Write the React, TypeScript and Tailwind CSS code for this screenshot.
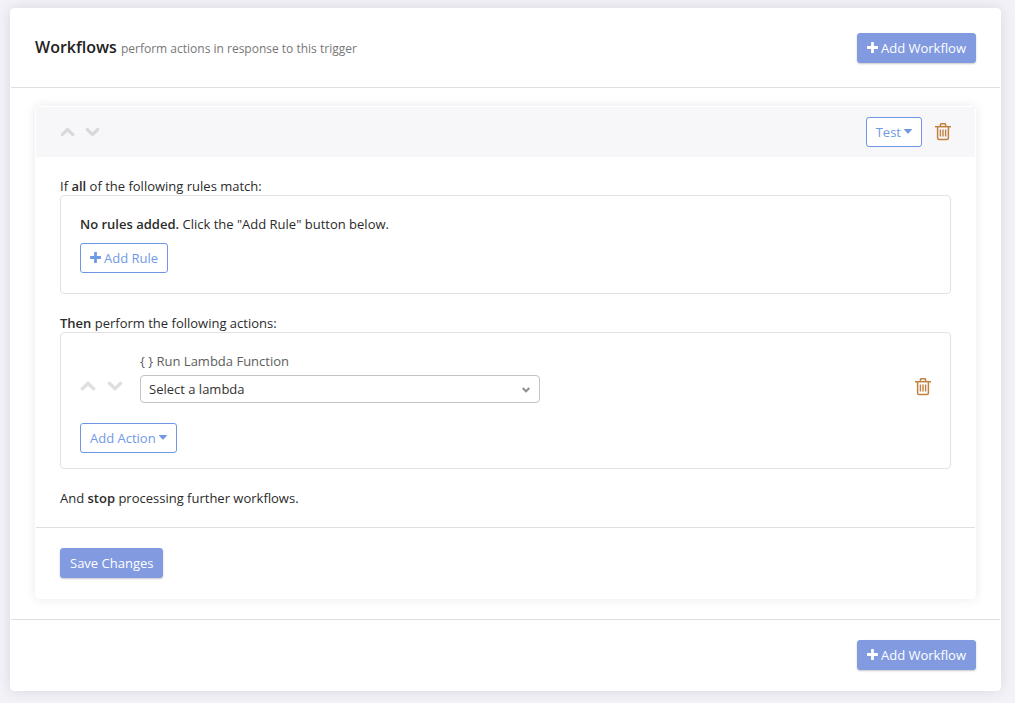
import type { ReactNode } from "react";

type ButtonProps = {
  children: ReactNode;
  variant?: "primary" | "outline";
};

function Button({ children, variant = "primary" }: ButtonProps) {
  const styles =
    variant === "primary"
      ? "border-[#819ae0] bg-[#819ae0] text-white font-medium shadow-[0_1px_2px_rgba(0,0,0,0.22)]"
      : "border-[#6f96e4] bg-white text-[#7199e6]";
  return (
    <button
      type="button"
      className={`flex h-[30px] shrink-0 cursor-pointer items-center rounded-[3px] border px-[9px] text-[13px] leading-[18px] whitespace-nowrap ${styles}`}
    >
      {children}
    </button>
  );
}

function PlusIcon() {
  return (
    <svg viewBox="0 0 11 11" className="mr-[3px] mb-[2px] size-[11px]" fill="currentColor" aria-hidden="true">
      <path d="M4.7 0h1.6q.6 0 .6.6v3.5h3.5q.6 0 .6.6v1.6q0 .6-.6.6H6.9v3.5q0 .6-.6.6H4.7q-.6 0-.6-.6V6.9H.6q-.6 0-.6-.6V4.7q0-.6.6-.6h3.5V.6q0-.6.6-.6z" />
    </svg>
  );
}

function CaretIcon() {
  return (
    <svg viewBox="0 0 8 5" className="mb-[2px] ml-[3px] h-[5px] w-2" fill="currentColor" aria-hidden="true">
      <path d="M.3 0h7.4q.5.2.1.7L4.4 4.4q-.4.3-.8 0L.2.7Q-.2.2.3 0z" />
    </svg>
  );
}

function MoveButtons({ wide = false }: { wide?: boolean }) {
  const iconSize = wide ? "h-[11px] w-4" : "h-[11px] w-[15px]";
  return (
    <div className={wide ? "flex gap-[11px] text-[#dfdfdf]" : "flex gap-[10px] text-[#d9d9db]"}>
      <button type="button" aria-label="Move up">
        <svg viewBox="0 0 16 11" className={iconSize} fill="none" stroke="currentColor" strokeWidth="3.4" strokeLinecap="round" strokeLinejoin="round">
          <path d="M2.4 7.7 8 2.3l5.6 5.4" />
        </svg>
      </button>
      <button type="button" aria-label="Move down">
        <svg viewBox="0 0 16 11" className={iconSize} fill="none" stroke="currentColor" strokeWidth="3.4" strokeLinecap="round" strokeLinejoin="round">
          <path d="M2.4 2.3 8 7.7l5.6-5.4" />
        </svg>
      </button>
    </div>
  );
}

function DeleteButton() {
  return (
    <button type="button" aria-label="Delete" className="shrink-0 text-[#c1803f]">
      <svg viewBox="0 1 16 18" className="h-[18px] w-4" fill="none" stroke="currentColor" strokeWidth="1.5">
        <path d="M0 4.7h16" />
        <path d="M5.4 4.4V2.8q0-1.1 1.1-1.1h3q1.100 0 1.100 1.100v1.600" />
        <path d="M2.600 4.700v11.200q0 1.500 1.500 1.500h7.800q1.500 0 1.500-1.500V4.700" />
        <path d="M5.400 7.500v7M8 7.500v7M10.600 7.500v7" strokeWidth="1.400" />
      </svg>
    </button>
  );
}

function WorkflowCard() {
  return (
    <section className="rounded-[4px] border border-white bg-white shadow-[0_0_12px_rgba(0,0,0,0.09)]">
      <header className="flex items-center justify-between bg-[#f7f7fa] px-6 py-[10px]">
        <MoveButtons />
        <div className="flex items-center gap-[13px]">
          <Button variant="outline">
            Test
            <CaretIcon />
          </Button>
          <DeleteButton />
        </div>
      </header>

      <div className="px-6 py-5">
        <p>
          If <b className="font-semibold">all</b> of the following rules match:
        </p>
        <div className="mb-5 rounded-[4px] border border-[#e2e2e2] px-[19px] pt-[19px] pb-5">
          <p className="mb-[10px]">
            <b className="font-semibold">No rules added.</b> Click the "Add Rule" button below.
          </p>
          <Button variant="outline">
            <PlusIcon />
            Add Rule
          </Button>
        </div>

        <p>
          <b className="font-semibold">Then</b> perform the following actions:
        </p>
        <div className="mb-5 rounded-[4px] border border-[#e2e2e2] px-[19px] pt-[19px] pb-[15px]">
          <div className="mb-5 flex items-center">
            <div className="w-[60px] shrink-0 pt-[18px]">
              <MoveButtons wide />
            </div>
            <div className="min-w-0 flex-1">
              <label htmlFor="lambda" className="mb-[5px] block text-[#5e5e5e]">
                {"{ }"} Run Lambda Function
              </label>
              <div className="relative max-w-[400px]">
                <select
                  id="lambda"
                  className="block h-7 w-full appearance-none rounded-[4px] border border-[#c4c4c4] bg-white px-2 text-[13px] text-[#333]"
                >
                  <option>Select a lambda</option>
                </select>
                <svg viewBox="0 0 8 6" className="pointer-events-none absolute top-3 right-[10px] h-[6px] w-2" fill="none" stroke="#8f8f8f" strokeWidth="2" aria-hidden="true">
                  <path d="M.7 1 4 4.300 7.300 1" />
                </svg>
              </div>
            </div>
            <div className="flex pt-[18px]">
              <DeleteButton />
            </div>
          </div>
          <Button variant="outline">
            Add Action
            <CaretIcon />
          </Button>
        </div>

        <p>
          And <b className="font-semibold">stop</b> processing further workflows.
        </p>
      </div>

      <footer className="border-t border-[#dfdfdf] px-6 py-5">
        <Button>Save Changes</Button>
      </footer>
    </section>
  );
}

export default function App() {
  return (
    <main className="min-h-screen bg-[#f2f2f8] py-2 pr-[14px] pl-[10px] font-['Open_Sans',sans-serif] text-[13px] leading-[18px] text-[#2b2b2b]">
      <div className="rounded-[4px] border border-white bg-white shadow-[0_0_14px_rgba(0,0,0,0.11)]">
        <header className="flex items-start justify-between border-b border-[#dfdfdf] p-6">
          <h1 className="text-base leading-7 font-semibold text-[#222]">
            Workflows <small className="text-xs font-normal text-[#777]">perform actions in response to this trigger</small>
          </h1>
          <Button>
            <PlusIcon />
            Add Workflow
          </Button>
        </header>
        <div className="px-6 pt-[18px] pb-5">
          <WorkflowCard />
        </div>
        <footer className="flex justify-end border-t border-[#dfdfdf] px-6 py-5">
          <Button>
            <PlusIcon />
            Add Workflow
          </Button>
        </footer>
      </div>
    </main>
  );
}
